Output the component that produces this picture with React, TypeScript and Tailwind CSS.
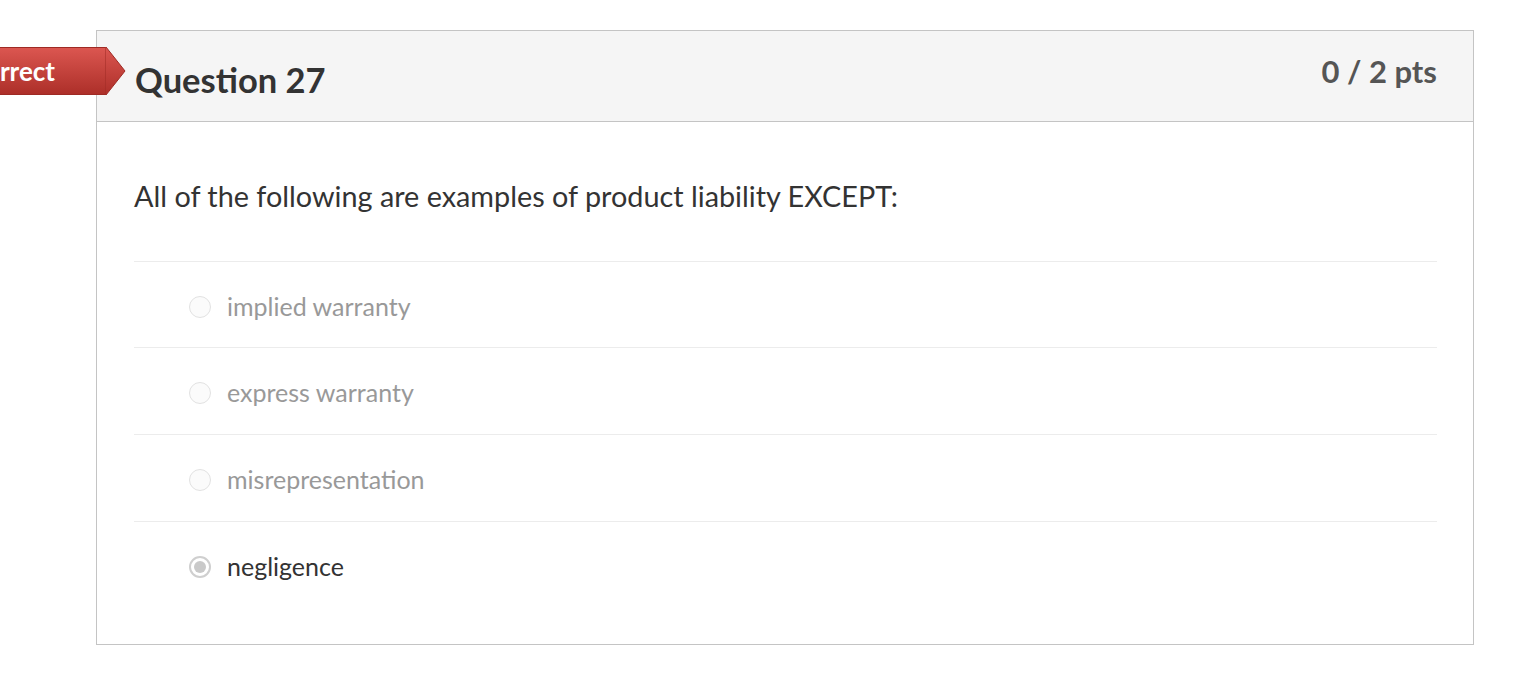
import React from "react";

const options = [
  { label: "implied warranty", selected: false },
  { label: "express warranty", selected: false },
  { label: "misrepresentation", selected: false },
  { label: "negligence", selected: true },
];

function Radio({ selected }: { selected: boolean }) {
  return (
    <span
      className={
        "relative inline-flex h-[22px] w-[22px] shrink-0 items-center justify-center rounded-full " +
        (selected ? "border-2 border-[#cfcfcf] bg-white" : "border border-[#e2e2e2] bg-[#fbfbfb]")
      }
    >
      {selected && <span className="h-[12px] w-[12px] rounded-full bg-[#c9c9c9]" />}
    </span>
  );
}

export default function App() {
  return (
    <div
      className="relative min-h-[698px] bg-white pt-[30px] pl-[96px] pr-[52px]"
      style={{ fontFamily: "Lato, 'Open Sans', sans-serif" }}
    >
      <div className="relative w-[1378px] border border-[#c4c4c4] bg-white">
        {/* Incorrect ribbon */}
        <div className="absolute left-[-180px] top-[16px] z-10 flex h-[48px] items-center">
          <div className="flex h-[48px] w-[189px] items-center justify-end border-y border-[#9e2a24] bg-gradient-to-b from-[#db5650] to-[#ad2f29] pr-[51px] text-[26px] font-bold leading-none text-white">
            Incorrect
          </div>
          <svg width="21" height="48" viewBox="0 0 21 48" className="-ml-px">
            <defs>
              <linearGradient id="rg" x1="0" y1="0" x2="0" y2="1">
                <stop offset="0" stopColor="#db5650" />
                <stop offset="1" stopColor="#ad2f29" />
              </linearGradient>
            </defs>
            <polygon points="0,0 1,0 20,24 1,48 0,48" fill="url(#rg)" stroke="#9e2a24" strokeWidth="1" />
          </svg>
        </div>

        <div className="flex h-[91px] items-start justify-between border-b border-[#c4c4c4] bg-[#f5f5f5] pl-[38px] pr-[36px]">
          <h2 className="mt-[28px] text-[34.5px] font-bold leading-[42px] text-[#333]">
            Question 27
          </h2>
          <div className="mt-[20px] text-[31px] font-bold leading-[40px] text-[#555]">0 / 2 pts</div>
        </div>

        <div className="pl-[37px] pr-[36px] pt-[54px] pb-[36px]">
          <p className="mb-[45px] text-[28.8px] leading-[40px] text-[#333]">
            All of the following are examples of product liability EXCEPT:
          </p>
          <div>
            {options.map((o, i) => (
              <div
                key={o.label}
                className={
                  "flex items-center border-t border-[#ececec] pl-[55px] pt-[4px] " +
                  (i === 0 ? "h-[86px]" : "h-[87px]")
                }
              >
                <Radio selected={o.selected} />
                <span
                  className={
                    "ml-[16px] text-[25px] " + (o.selected ? "text-[#333]" : "text-[#999]")
                  }
                >
                  {o.label}
                </span>
              </div>
            ))}
          </div>
        </div>
      </div>
    </div>
  );
}
